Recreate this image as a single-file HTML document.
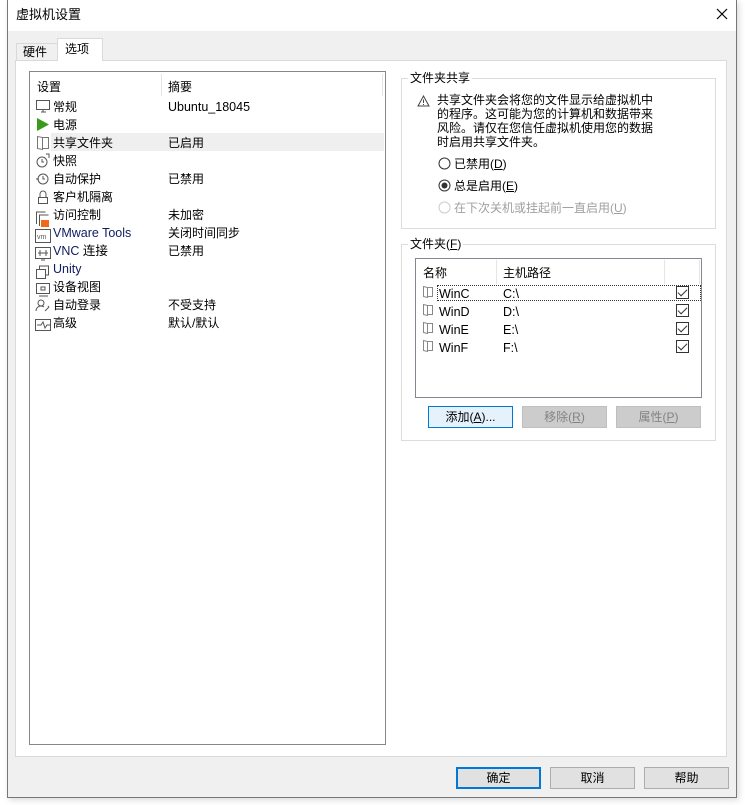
<!DOCTYPE html>
<html><head><meta charset="utf-8"><style>
*{margin:0;padding:0;box-sizing:border-box}
body{width:745px;height:805px;background:#fff;font-family:"Liberation Sans","Noto Sans CJK SC",sans-serif;font-size:12px;color:#000;position:relative;overflow:hidden}
.a{position:absolute}
.win{left:7px;top:0;width:730px;height:798px;background:#f0f0f0;border:1px solid #777;border-top:none;box-shadow:2px 2px 6px rgba(0,0,0,.15)}
.title{left:8px;top:0;width:728px;height:31px;background:#fff}
.t{position:absolute;white-space:nowrap;line-height:16px}
.l{font-size:12.5px}
.panel{left:15px;top:60px;width:712px;height:697px;background:#fff;border:1px solid #d9d9d9}
.list{left:29px;top:71px;width:357px;height:674px;border:1px solid #828790;background:#fff}
.grp{border:1px solid #dcdcdc}
.btn{border:1px solid #adadad;background:#e1e1e1;text-align:center;line-height:20px}
.dis{border-color:#bfbfbf;background:#ccc;color:#838383}
.cb{position:absolute;width:13px;height:13px;border:1px solid #333;background:#fff}
.cb:after{content:"";position:absolute;left:3px;top:0px;width:4px;height:8px;border:solid #333;border-width:0 1.2px 1.2px 0;transform:rotate(45deg)}
.blu{color:#101c60}
</style></head><body>
<div class="a win"></div>
<div class="a title"></div>
<div class="t" style="left:16px;top:7px;font-size:13px">虚拟机设置</div>
<svg class="a" style="left:716px;top:8px" width="12" height="12"><path d="M1 1L11 11M11 1L1 11" stroke="#000" stroke-width="1.2"/></svg>
<div class="a" style="left:16px;top:43px;width:42px;height:18px;border:1px solid #d9d9d9;border-bottom:none;background:#f0f0f0"></div>
<div class="t" style="left:23px;top:44px">硬件</div>
<div class="a" style="left:57px;top:38px;width:46px;height:23px;border:1px solid #d9d9d9;border-bottom:none;background:#fff;z-index:2"></div>
<div class="t" style="left:65px;top:41px;z-index:3">选项</div>
<div class="a panel"></div>
<div class="a list"></div>
<div class="a" style="left:161px;top:74px;width:1px;height:22px;background:#e5e5e5"></div>
<div class="a" style="left:382px;top:74px;width:1px;height:22px;background:#e5e5e5"></div>
<div class="t" style="left:37px;top:79px">设置</div>
<div class="t" style="left:168px;top:79px">摘要</div>
<div class="a" style="left:51px;top:133px;width:333px;height:18px;background:#efefef"></div>
<svg class="a" style="left:35px;top:99px" width="18" height="234" fill="none" stroke="#555" stroke-width="1">
<rect x="1.5" y="1.5" width="13" height="9"/><path d="M6 13h5M8 10v3"/>
<path d="M2 19l12 6.5L2 32z" fill="#3a9a1a" stroke="none"/>
<path d="M2.5 37.5l5 1v12l-5-1zM7.5 38.5h6v11h-6" stroke="#777"/>
<circle cx="7" cy="63" r="5"/><path d="M7 60v3h2M11 55h3v4"/>
<circle cx="8" cy="80" r="5"/><path d="M8 77v3h2M1 80h3"/>
<rect x="3.5" y="98.5" width="9" height="6"/><path d="M5 98v-3a3 3 0 0 1 6 0v3"/>
<path d="M1.5 125v-12h9M4.5 127v-11h9"/><rect x="6" y="121" width="8" height="7" fill="#f06a1a" stroke="none"/>
<rect x="0.5" y="130.5" width="15" height="13"/><text x="2" y="140" font-size="7" fill="#555" stroke="none" font-family="Liberation Sans">vm</text>
<rect x="0.5" y="148.5" width="15" height="11"/><path d="M3 154h10M5 151v6M11 151v6M6 161h4"/>
<path d="M1.5 170.5h9v9h-9zM4.5 170v-3h9v9h-3"/>
<rect x="1.5" y="184.5" width="13" height="10"/><path d="M4 197h9M6 188h4v3h-4z"/>
<circle cx="6" cy="204" r="3"/><path d="M1 212a5 5 0 0 1 8-4M10 212l4-4M13 207l1 1"/>
<path d="M0.5 220.5h15v11h-15zM2 226h4l2-3 2 6 2-3h3"/>
</svg>
<div class="t" style="left:53px;top:99px">常规</div><div class="t l" style="left:168px;top:99px">Ubuntu_18045</div>
<div class="t" style="left:53px;top:117px">电源</div>
<div class="t" style="left:53px;top:135px">共享文件夹</div><div class="t" style="left:168px;top:135px">已启用</div>
<div class="t" style="left:53px;top:153px">快照</div>
<div class="t" style="left:53px;top:171px">自动保护</div><div class="t" style="left:168px;top:171px">已禁用</div>
<div class="t" style="left:53px;top:189px">客户机隔离</div>
<div class="t" style="left:53px;top:207px">访问控制</div><div class="t" style="left:168px;top:207px">未加密</div>
<div class="t blu l" style="left:53px;top:225px">VMware Tools</div><div class="t" style="left:168px;top:225px">关闭时间同步</div>
<div class="t blu l" style="left:53px;top:243px">VNC <span style="color:#000">连接</span></div><div class="t" style="left:168px;top:243px">已禁用</div>
<div class="t blu l" style="left:53px;top:261px">Unity</div>
<div class="t" style="left:53px;top:279px">设备视图</div>
<div class="t" style="left:53px;top:297px">自动登录</div><div class="t" style="left:168px;top:297px">不受支持</div>
<div class="t" style="left:53px;top:315px">高级</div><div class="t" style="left:168px;top:315px">默认/默认</div>
<div class="a grp" style="left:401px;top:78px;width:315px;height:151px"></div>
<div class="t" style="left:408px;top:70px;background:#fff;padding:0 2px">文件夹共享</div>
<svg class="a" style="left:417px;top:95px" width="13" height="12"><path d="M6.5 1L12 11H1z" fill="none" stroke="#444"/><path d="M6.5 4.5v3.5M6.5 9v1" stroke="#444"/></svg>
<div class="t" style="left:437px;top:93px;line-height:14px">共享文件夹会将您的文件显示给虚拟机中<br>的程序。这可能为您的计算机和数据带来<br>风险。请仅在您信任虚拟机使用您的数据<br>时启用共享文件夹。</div>
<svg class="a" style="left:438px;top:157px" width="13" height="60"><circle cx="6.5" cy="6.5" r="5.5" fill="#fff" stroke="#333"/><circle cx="6.5" cy="28.5" r="5.5" fill="#fff" stroke="#333"/><circle cx="6.5" cy="28.5" r="3" fill="#333"/><circle cx="6.5" cy="50.5" r="5.5" fill="#fff" stroke="#ccc"/></svg>
<div class="t" style="left:454px;top:156px">已禁用(<u>D</u>)</div>
<div class="t" style="left:454px;top:178px">总是启用(<u>E</u>)</div>
<div class="t" style="left:454px;top:200px;color:#a0a0a0">在下次关机或挂起前一直启用(<u>U</u>)</div>
<div class="a grp" style="left:401px;top:244px;width:315px;height:197px"></div>
<div class="t" style="left:408px;top:236px;background:#fff;padding:0 2px">文件夹(<u>F</u>)</div>
<div class="a" style="left:415px;top:258px;width:287px;height:140px;border:1px solid #828790"></div>
<div class="a" style="left:496px;top:260px;width:1px;height:24px;background:#e5e5e5"></div>
<div class="a" style="left:664px;top:260px;width:1px;height:24px;background:#e5e5e5"></div>
<div class="a" style="left:699px;top:260px;width:1px;height:24px;background:#e5e5e5"></div>
<div class="t" style="left:423px;top:265px">名称</div>
<div class="t" style="left:503px;top:265px">主机路径</div>
<div class="a" style="left:437px;top:285px;width:264px;height:16px;border:1px dotted #333"></div>
<svg class="a" style="left:423px;top:286px" width="12" height="70" fill="none" stroke="#888"><path d="M0.5 0.5l4 1v10l-4-1zM4.5 1.5h5v9h-5"/><path d="M0.5 18.5l4 1v10l-4-1zM4.5 19.5h5v9h-5"/><path d="M0.5 36.5l4 1v10l-4-1zM4.5 37.5h5v9h-5"/><path d="M0.5 54.5l4 1v10l-4-1zM4.5 55.5h5v9h-5"/></svg>
<div class="t l" style="left:439px;top:286px">WinC</div><div class="t l" style="left:503px;top:286px">C:\</div>
<div class="t l" style="left:439px;top:304px">WinD</div><div class="t l" style="left:503px;top:304px">D:\</div>
<div class="t l" style="left:439px;top:322px">WinE</div><div class="t l" style="left:503px;top:322px">E:\</div>
<div class="t l" style="left:439px;top:340px">WinF</div><div class="t l" style="left:503px;top:340px">F:\</div>
<div class="cb" style="left:676px;top:286px"></div>
<div class="cb" style="left:676px;top:304px"></div>
<div class="cb" style="left:676px;top:322px"></div>
<div class="cb" style="left:676px;top:340px"></div>
<div class="a btn" style="left:428px;top:406px;width:85px;height:22px;background:#e5f1fb;border-color:#0078d7">添加(<u>A</u>)...</div>
<div class="a btn dis" style="left:522px;top:406px;width:85px;height:22px">移除(<u>R</u>)</div>
<div class="a btn dis" style="left:616px;top:406px;width:85px;height:22px">属性(<u>P</u>)</div>
<div class="a btn" style="left:456px;top:767px;width:85px;height:22px;border:2px solid #0078d7;line-height:18px">确定</div>
<div class="a btn" style="left:550px;top:767px;width:85px;height:22px">取消</div>
<div class="a btn" style="left:644px;top:767px;width:85px;height:22px">帮助</div>
</body></html>
